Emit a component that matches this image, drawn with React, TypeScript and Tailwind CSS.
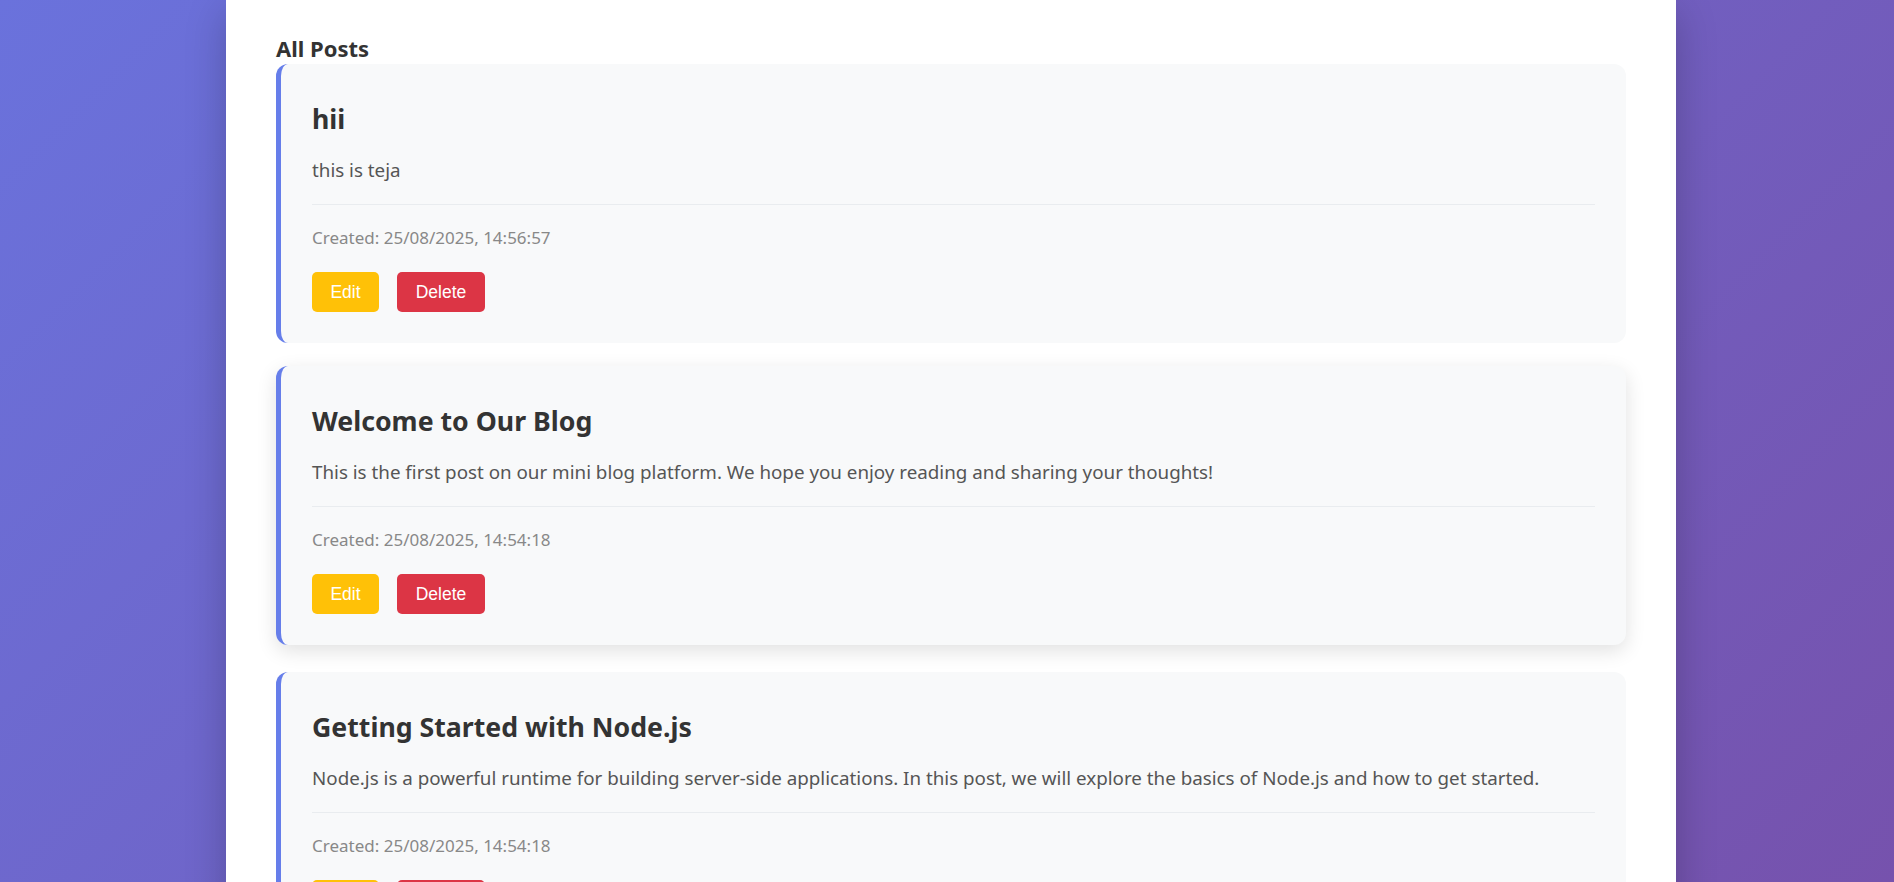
const posts = [
  {
    id: 1,
    title: 'hii',
    content: 'this is teja',
    created: '25/08/2025, 14:56:57',
  },
  {
    id: 2,
    title: 'Welcome to Our Blog',
    content:
      'This is the first post on our mini blog platform. We hope you enjoy reading and sharing your thoughts!',
    created: '25/08/2025, 14:54:18',
    hovered: true,
  },
  {
    id: 3,
    title: 'Getting Started with Node.js',
    content:
      'Node.js is a powerful runtime for building server-side applications. In this post, we will explore the basics of Node.js and how to get started.',
    created: '25/08/2025, 14:54:18',
  },
];

type Post = (typeof posts)[number] & { hovered?: boolean };

function PostCard({ post }: { post: Post }) {
  return (
    <div
      className={
        post.hovered
          ? 'rounded-[12px] border-l-[5px] border-[#667eea] bg-[#f8f9fa] pl-[31px] pr-[31px] pt-[37px] pb-[31px] -translate-y-[2px] shadow-[0_6px_20px_rgba(0,0,0,0.12)]'
          : 'rounded-[12px] border-l-[5px] border-[#667eea] bg-[#f8f9fa] pl-[31px] pr-[31px] pt-[37px] pb-[31px]'
      }
    >
      <h3 className="text-[26.7px] leading-[36px] font-bold text-[#333]">{post.title}</h3>
      <p className="mt-[18px] text-[18.8px] leading-[30px] text-[#555]">{post.content}</p>
      <div className="mt-[19px] border-t border-[#e9ecef] pt-[21px]">
        <div className="text-[17px] leading-[24px] text-[#888]">Created: {post.created}</div>
        <div className="mt-[22px] flex gap-[18px] font-['Liberation_Sans',Arial,sans-serif]">
          <button className="h-[40px] w-[67px] rounded-[5px] bg-[#ffc107] text-[17.5px] text-white">
            Edit
          </button>
          <button className="h-[40px] w-[88px] rounded-[5px] bg-[#dc3545] text-[17.5px] text-white">
            Delete
          </button>
        </div>
      </div>
    </div>
  );
}

export default function App() {
  return (
    <div className="h-[882px] overflow-hidden bg-[linear-gradient(135deg,#6a72dc_0%,#7652ad_100%)] font-['Noto_Sans',sans-serif]">
      <div className="ml-[226px] w-[1450px] min-h-[1200px] bg-white pl-[50px] pr-[50px] pt-[33px] shadow-[0_12px_38px_rgba(0,0,0,0.22)]">
        <h2 className="mb-px text-[22px] leading-[30px] font-bold text-[#333]">All Posts</h2>
        <div className="flex flex-col gap-[25px]">
          {posts.map((post) => (
            <PostCard key={post.id} post={post} />
          ))}
        </div>
      </div>
    </div>
  );
}
